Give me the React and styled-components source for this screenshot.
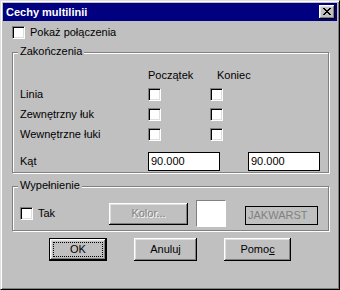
import React from 'react';
import styled, { createGlobalStyle } from 'styled-components';

const GlobalStyle = createGlobalStyle`
  html, body {
    margin: 0;
    padding: 0;
    background: #c0c0c0;
  }
`;

const Window = styled.div`
  width: 340px;
  height: 290px;
  box-sizing: border-box;
  background: #c0c0c0;
  border: 1px solid;
  border-color: #dfdfdf #000 #000 #dfdfdf;
  box-shadow: inset 1px 1px #fff, inset -1px -1px #808080;
  padding: 2px;
  display: flex;
  flex-direction: column;
  font-family: "Liberation Sans", Arial, sans-serif;
  font-size: 11px;
  line-height: 13px;
  color: #000;
`;

const TitleBar = styled.div`
  height: 18px;
  flex: none;
  background: #000080;
  color: #fff;
  font-weight: bold;
  display: flex;
  align-items: center;
  justify-content: space-between;
  padding: 0 2px 0 3px;
`;

const CloseButton = styled.div`
  width: 16px;
  height: 14px;
  box-sizing: border-box;
  background: #c0c0c0;
  box-shadow: inset -1px -1px #000, inset 1px 1px #fff, inset -2px -2px #808080, inset 2px 2px #dfdfdf;
  display: flex;
  align-items: center;
  justify-content: center;
  padding-bottom: 1px;
`;

const Body = styled.div`
  padding: 5px 8px 0 9px;
  display: flex;
  flex-direction: column;
`;

const CheckRow = styled.label`
  display: flex;
  align-items: center;
  gap: 5px;
  height: 13px;
  width: ${p => (p.$width ? `${p.$width}px` : 'auto')};
  flex: none;
`;

const Box = styled.span`
  width: 13px;
  height: 13px;
  box-sizing: border-box;
  flex: none;
  background: #fff;
  border: 1px solid;
  border-color: #808080 #fff #fff #808080;
  box-shadow: inset 1px 1px #000, inset -1px -1px #dfdfdf;
`;

const Group = styled.div`
  position: relative;
  margin-top: 13px;
  border: 1px solid #808080;
  box-shadow: inset 1px 1px #fff, 1px 1px #fff;
  padding: ${p => p.$pad};
  display: flex;
  flex-direction: column;
`;

const Legend = styled.span`
  position: absolute;
  top: -8px;
  left: 5px;
  padding: 0 2px;
  background: #c0c0c0;
`;

const Row = styled.div`
  display: flex;
  align-items: center;
  height: ${p => p.$h}px;
  margin-top: ${p => p.$mt || 0}px;
`;

const RowLabel = styled.span`
  width: 128px;
  flex: none;
`;

const Cell = styled.span`
  width: ${p => p.$w}px;
  flex: none;
  display: flex;
  align-items: center;
`;

const Field = styled.div`
  width: ${p => p.$w}px;
  height: ${p => p.$h}px;
  box-sizing: border-box;
  flex: none;
  border: 1px solid #000;
  background: ${p => (p.$disabled ? '#c0c0c0' : '#fff')};
  color: ${p => (p.$disabled ? '#808080' : '#000')};
  padding-left: 2px;
  display: flex;
  align-items: center;
  margin-top: ${p => p.$mt || 0}px;
`;

const Swatch = styled.div`
  width: 30px;
  height: 27px;
  box-sizing: border-box;
  flex: none;
  background: #fff;
  border: 1px solid;
  border-color: #808080 #fff #fff #808080;
`;

const Button = styled.div`
  width: ${p => p.$w}px;
  height: ${p => p.$h}px;
  box-sizing: border-box;
  flex: none;
  background: #c0c0c0;
  border: ${p => (p.$default ? '1px solid #000' : 'none')};
  box-shadow: inset -1px -1px #000, inset 1px 1px #fff, inset -2px -2px #808080, inset 2px 2px #dfdfdf;
  display: flex;
  align-items: stretch;
  padding: 3px;
  color: ${p => (p.$disabled ? '#808080' : '#000')};
  text-shadow: ${p => (p.$disabled ? '1px 1px #fff' : 'none')};
`;

const Face = styled.span`
  flex: 1;
  display: flex;
  align-items: center;
  justify-content: center;
  border: 1px dotted ${p => (p.$focus ? '#000' : 'transparent')};
`;

const ButtonRow = styled.div`
  display: flex;
  gap: 27px;
  padding-left: 37px;
  margin-top: 7px;
`;

const Close = () => (
  <svg width="8" height="7" viewBox="0 0 8 7" shapeRendering="crispEdges">
    <path
      d="M0 0h2v1h1v1h2v-1h1v-1h2v1h-1v1h-1v1h-1v1h1v1h1v1h1v1h-2v-1h-1v-1h-2v1h-1v1h-2v-1h1v-1h1v-1h1v-1h-1v-1h-1v-1h-1z"
      fill="#000"
    />
  </svg>
);

const App = () => (
  <>
    <GlobalStyle />
    <Window>
      <TitleBar>
        <span>Cechy multilinii</span>
        <CloseButton>
          <Close />
        </CloseButton>
      </TitleBar>
      <Body>
        <CheckRow>
          <Box />
          Pokaż połączenia
        </CheckRow>

        <Group $pad="16px 7px 1px">
          <Legend>Zakończenia</Legend>
          <Row $h={13}>
            <RowLabel />
            <Cell $w={69}>Początek</Cell>
            <Cell $w={60}>Koniec</Cell>
          </Row>
          <Row $h={20} $mt={2}>
            <RowLabel>Linia</RowLabel>
            <Cell $w={62}><Box /></Cell>
            <Cell $w={20}><Box /></Cell>
          </Row>
          <Row $h={20}>
            <RowLabel>Zewnętrzny łuk</RowLabel>
            <Cell $w={62}><Box /></Cell>
            <Cell $w={20}><Box /></Cell>
          </Row>
          <Row $h={20}>
            <RowLabel>Wewnętrzne łuki</RowLabel>
            <Cell $w={62}><Box /></Cell>
            <Cell $w={20}><Box /></Cell>
          </Row>
          <Row $h={19} $mt={8}>
            <RowLabel>Kąt</RowLabel>
            <Field $w={72} $h={19}>90.000</Field>
            <Cell $w={28} />
            <Field $w={72} $h={19}>90.000</Field>
          </Row>
        </Group>

        <Group $pad="13px 7px 3px">
          <Legend>Wypełnienie</Legend>
          <Row $h={27}>
            <CheckRow $width={89}>
              <Box />
              Tak
            </CheckRow>
            <Button $w={79} $h={22} $disabled>
              <Face>Kolor...</Face>
            </Button>
            <Cell $w={8} />
            <Swatch />
            <Cell $w={19} />
            <Field $w={73} $h={19} $mt={3} $disabled>JAKWARST</Field>
          </Row>
        </Group>

        <ButtonRow>
          <Button $w={58} $h={23} $default>
            <Face $focus>OK</Face>
          </Button>
          <Button $w={63} $h={23}>
            <Face>Anuluj</Face>
          </Button>
          <Button $w={67} $h={23}>
            <Face>Pomo<u>c</u></Face>
          </Button>
        </ButtonRow>
      </Body>
    </Window>
  </>
);

export default App;
